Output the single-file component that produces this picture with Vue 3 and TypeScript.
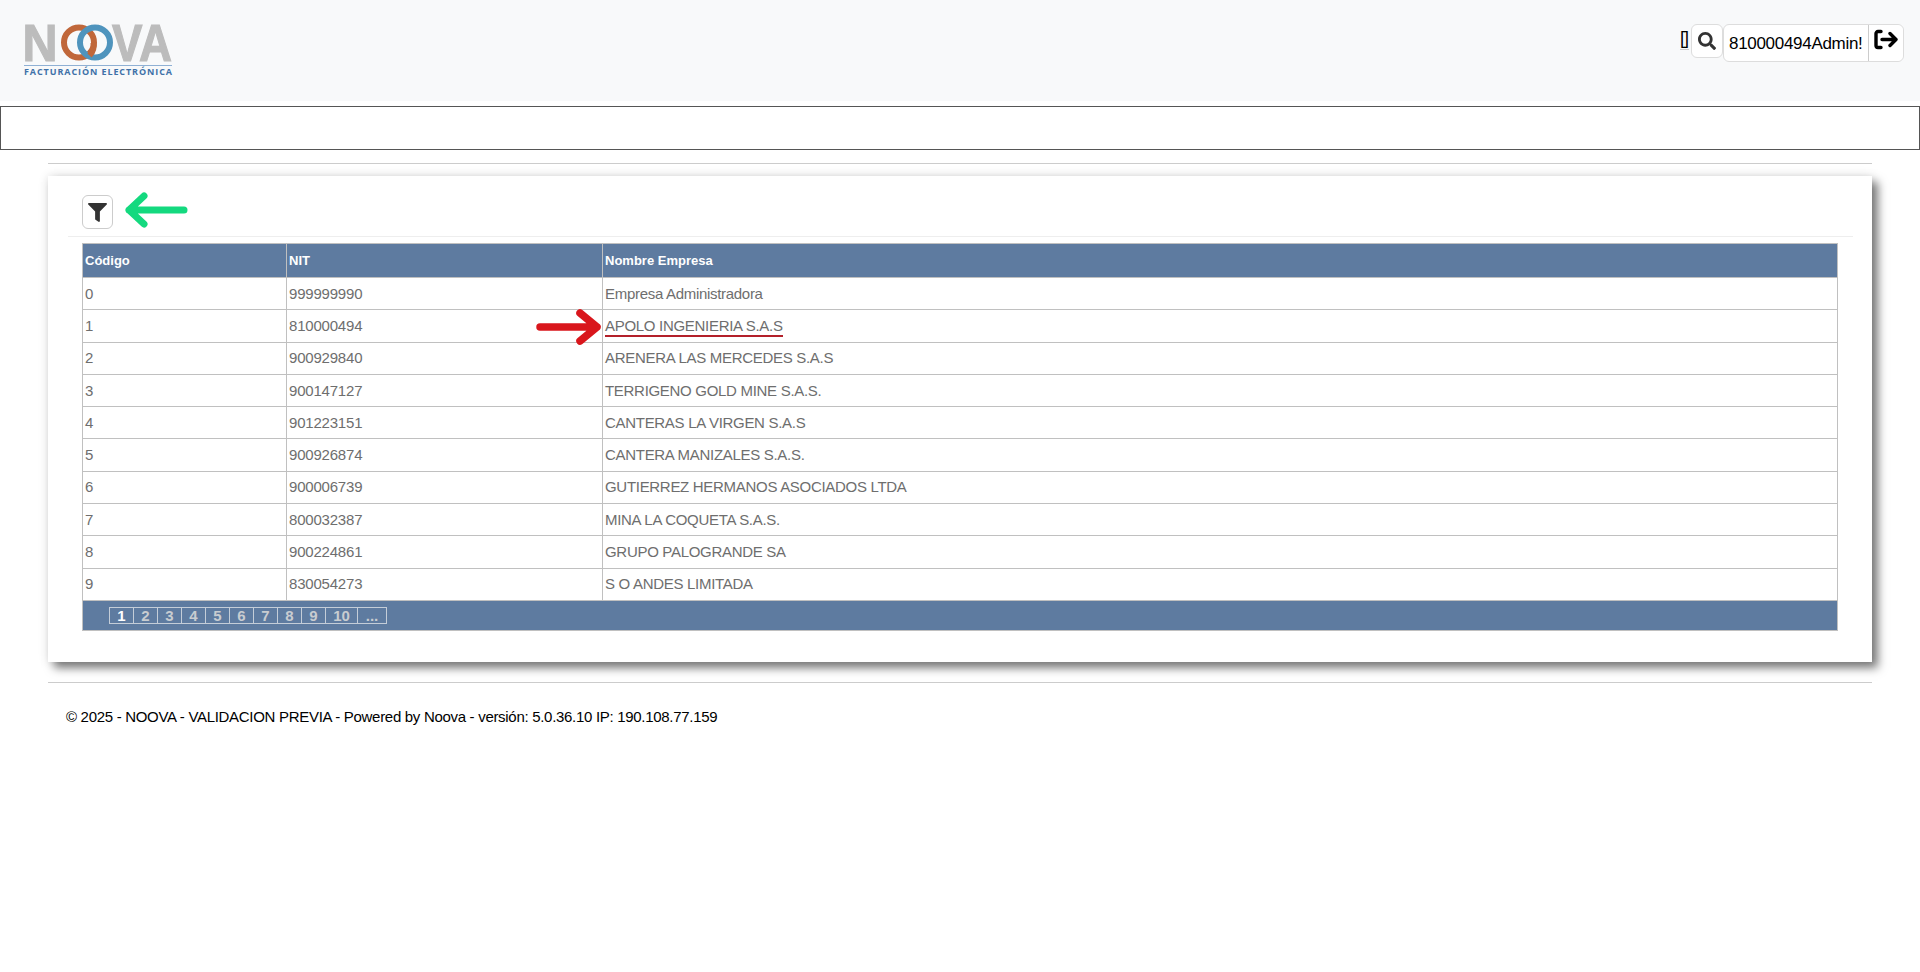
<script setup lang="ts">
interface Row { code: string; nit: string; name: string }
const rows: Row[] = [
  { code: '0', nit: '999999990', name: 'Empresa Administradora' },
  { code: '1', nit: '810000494', name: 'APOLO INGENIERIA S.A.S' },
  { code: '2', nit: '900929840', name: 'ARENERA LAS MERCEDES S.A.S' },
  { code: '3', nit: '900147127', name: 'TERRIGENO GOLD MINE S.A.S.' },
  { code: '4', nit: '901223151', name: 'CANTERAS LA VIRGEN S.A.S' },
  { code: '5', nit: '900926874', name: 'CANTERA MANIZALES S.A.S.' },
  { code: '6', nit: '900006739', name: 'GUTIERREZ HERMANOS ASOCIADOS LTDA' },
  { code: '7', nit: '800032387', name: 'MINA LA COQUETA S.A.S.' },
  { code: '8', nit: '900224861', name: 'GRUPO PALOGRANDE SA' },
  { code: '9', nit: '830054273', name: 'S O ANDES LIMITADA' },
]
const pages: string[] = ['1', '2', '3', '4', '5', '6', '7', '8', '9', '10', '...']
</script>

<template>
  <div class="page">
    <header class="header">
      <svg class="logo" width="172" height="72" viewBox="0 -16 172 72" role="img" aria-label="NOOVA">
        <text x="-0.500" y="36.500" class="logo-word" textLength="35" lengthAdjust="spacingAndGlyphs">N</text>
        <text x="89" y="36.500" class="logo-word" textLength="60" lengthAdjust="spacingAndGlyphs">VA</text>
        <circle cx="56" cy="18.500" r="15" fill="none" stroke="#c0673a" stroke-width="6" />
        <circle cx="72" cy="18.500" r="15" fill="none" stroke="#4f94bd" stroke-width="6" />
        <path d="M66.500 31.500 A15 15 0 0 0 70.500 18.500" fill="none" stroke="#c0673a" stroke-width="6" />
        <rect x="1" y="41" width="148" height="1" fill="#8fb0d4" />
        <text x="1" y="51" class="logo-sub" textLength="148" lengthAdjust="spacing">FACTURACIÓN ELECTRÓNICA</text>
      </svg>
      <div class="actions">
        <span class="glyph">[]</span>
        <button class="icon-btn search" aria-label="Buscar">
          <svg width="18" height="18" viewBox="0 0 512 512"><path fill="#333" d="M505 442.7L405.3 343c-4.500-4.500-10.600-7-17-7H372c27.600-35.300 44-79.700 44-128C416 93.100 322.900 0 208 0S0 93.100 0 208s93.100 208 208 208c48.300 0 92.700-16.400 128-44v16.300c0 6.400 2.500 12.500 7 17l99.700 99.700c9.400 9.400 24.600 9.400 33.900 0l28.300-28.300c9.400-9.400 9.400-24.600.1-34zM208 336c-70.700 0-128-57.200-128-128 0-70.700 57.200-128 128-128 70.700 0 128 57.200 128 128 0 70.700-57.200 128-128 128z"/></svg>
        </button>
        <div class="user-group">
          <span class="user">810000494Admin!</span>
          <button class="logout" aria-label="Salir">
            <svg width="24" height="22" viewBox="0 0 24 22" fill="none" stroke="#000" stroke-width="3.400" stroke-linecap="round" stroke-linejoin="round"><path d="M7 2.500H4a2 2 0 0 0-2 2v12a2 2 0 0 0 2 2h3"/><path d="M8 10.500h14M16 4.500l6 6-6 6"/></svg>
          </button>
        </div>
      </div>
    </header>

    <div class="empty-bar"></div>

    <main class="content">
      <hr class="rule" />
      <section class="card">
        <div class="toolbar">
          <button class="filter" aria-label="Filtrar">
            <svg width="19" height="19" viewBox="0 0 512 512"><path fill="#333" d="M487.976 0H24.028C2.710 0-8.047 25.866 7.058 40.971L192 225.941V432c0 7.831 3.821 15.170 10.237 19.662l80 55.980C298.020 518.690 320 507.493 320 487.980V225.941l184.947-184.970C520.021 25.896 509.338 0 487.976 0z"/></svg>
          </button>
        </div>
        <table class="grid">
          <colgroup>
            <col class="c1" /><col class="c2" /><col />
          </colgroup>
          <thead>
            <tr><th>Código</th><th>NIT</th><th>Nombre Empresa</th></tr>
          </thead>
          <tbody>
            <tr v-for="r in rows" :key="r.code">
              <td class="num">{{ r.code }}</td>
              <td class="num">{{ r.nit }}</td>
              <td><span :class="{ marked: r.code === '1' }">{{ r.name }}</span></td>
            </tr>
          </tbody>
          <tfoot>
            <tr>
              <td colspan="3" class="pager-cell">
                <div class="pager">
                  <span v-for="(p, i) in pages" :key="p" class="pg" :class="{ active: i === 0, ten: p === '10', more: p === '...' }">{{ p }}</span>
                </div>
              </td>
            </tr>
          </tfoot>
        </table>
        <svg class="arrow green" width="66" height="36" viewBox="0 0 66 36" fill="none" stroke="#14d97f" stroke-width="7" stroke-linecap="round" stroke-linejoin="round"><path d="M60 18H5M20 4 5 18l15 14"/></svg>
        <svg class="arrow red" width="66" height="36" viewBox="0 0 66 36" fill="none" stroke="#d9161c" stroke-width="7.500" stroke-linecap="round" stroke-linejoin="round"><path d="M4 18h57M44 4l17 14-17 14"/></svg>
      </section>
      <hr class="rule lower" />
      <footer class="footer">© 2025 - NOOVA - VALIDACION PREVIA - Powered by Noova - versión: 5.0.36.10 IP: 190.108.77.159</footer>
    </main>
  </div>
</template>

<style>
html, body { margin: 0; background: #fff; }
</style>

<style scoped>
.page {
  font-family: "Liberation Sans", Arial, sans-serif;
  min-height: 972px;
  background: #fff;
  overflow: hidden;
}
.header {
  height: 101px;
  background: #f8f9fa;
  display: flex;
  justify-content: space-between;
  align-items: flex-start;
  padding: 8px 16px 0 23px;
  box-sizing: border-box;
}
.logo { display: block; }
.logo-word { font: 700 51px "Liberation Sans", sans-serif; fill: #bcbcbc; stroke: #bcbcbc; stroke-width: 1.2px; }
.logo-sub { font: 700 9px "Open Sans", "Liberation Sans", sans-serif; fill: #3f71a8; }
.actions { display: flex; align-items: flex-start; margin-top: 16px; }
.glyph { font-size: 18px; line-height: 20px; color: #000; margin: 4px 2px 0 0; width: 9px; height: 22px; border-bottom: 1px solid #ccc; letter-spacing: -1px; box-sizing: border-box; }
button { font: inherit; background: #fff; padding: 0; display: flex; align-items: center; justify-content: center; }
.icon-btn {
  width: 32px; height: 34px; border: 1px solid #ddd; border-radius: 6px; box-sizing: border-box;
}
.user-group {
  display: flex; width: 181px; height: 38px;
  border: 1px solid #ddd; border-radius: 6px; background: #fff; box-sizing: border-box;
}
.user { flex: 1; padding-left: 5px; font-size: 17px; line-height: 37px; color: #000; letter-spacing: -.3px; white-space: nowrap; }
.logout { width: 35px; border: 0; border-left: 1px solid #ccc; border-radius: 0 6px 6px 0; padding-bottom: 6px; }
.empty-bar {
  margin-top: 5px;
  height: 44px;
  border: 1px solid #555;
  box-sizing: border-box;
  background: #fff;
}
.content { padding: 13px 48px 0; }
.rule { border: 0; border-top: 1px solid #ccc; margin: 0; }
.rule.lower { margin-top: 20px; }
.card {
  position: relative;
  margin-top: 12px;
  height: 486px;
  box-sizing: border-box;
  padding: 19px 34px 0;
  background: #fff;
  box-shadow: 0 0 10px rgba(0,0,0,.12), 6px 6px 9px rgba(0,0,0,.5);
}
.toolbar {
  height: 41px;
  margin: 0 -15px 6px -14px;
  padding-left: 14px;
  border-bottom: 1px solid #eee;
}
.filter { width: 31px; height: 34px; border: 1px solid #ccc; border-radius: 6px; box-sizing: border-box; }
.grid {
  width: 1756px;
  border-collapse: collapse;
  table-layout: fixed;
  font-size: 15px;
  color: #6e6e6e;
}
.c1 { width: 204px; }
.c2 { width: 316px; }
th {
  height: 33px; padding: 0 2px; background: #5e7ba0; color: #fff;
  font-size: 13px; font-weight: 700; text-align: left;
  border: 1px solid #c0c0c0;
}
td { height: 30.300px; padding: 0 2px 1px; border: 1px solid #c0c0c0; white-space: nowrap; letter-spacing: -.3px; }
td.num { letter-spacing: -.2px; }
.marked { border-bottom: 2px solid #b3202a; padding-bottom: 1px; }
td.pager-cell { height: 29px; background: #5e7ba0; padding: 0 0 0 26px; }
.pager { display: flex; }
.pg {
  width: 23px; height: 15px; line-height: 15px; text-align: center;
  border: 1px solid #c4cdd8; border-left: 0; font-size: 15px; font-weight: 700; color: #c8ccd0; letter-spacing: 0;
}
.pg:first-child { border-left: 1px solid #c4cdd8; }
.pg.active { color: #fff; }
.pg.ten { width: 31px; }
.pg.more { width: 28px; }
.arrow { position: absolute; }
.arrow.green { left: 76px; top: 16px; }
.arrow.red { left: 488px; top: 133px; }
.footer { margin-top: 24px; padding-left: 18px; font-size: 15px; line-height: 20px; color: #000; letter-spacing: -.3px; }
</style>
